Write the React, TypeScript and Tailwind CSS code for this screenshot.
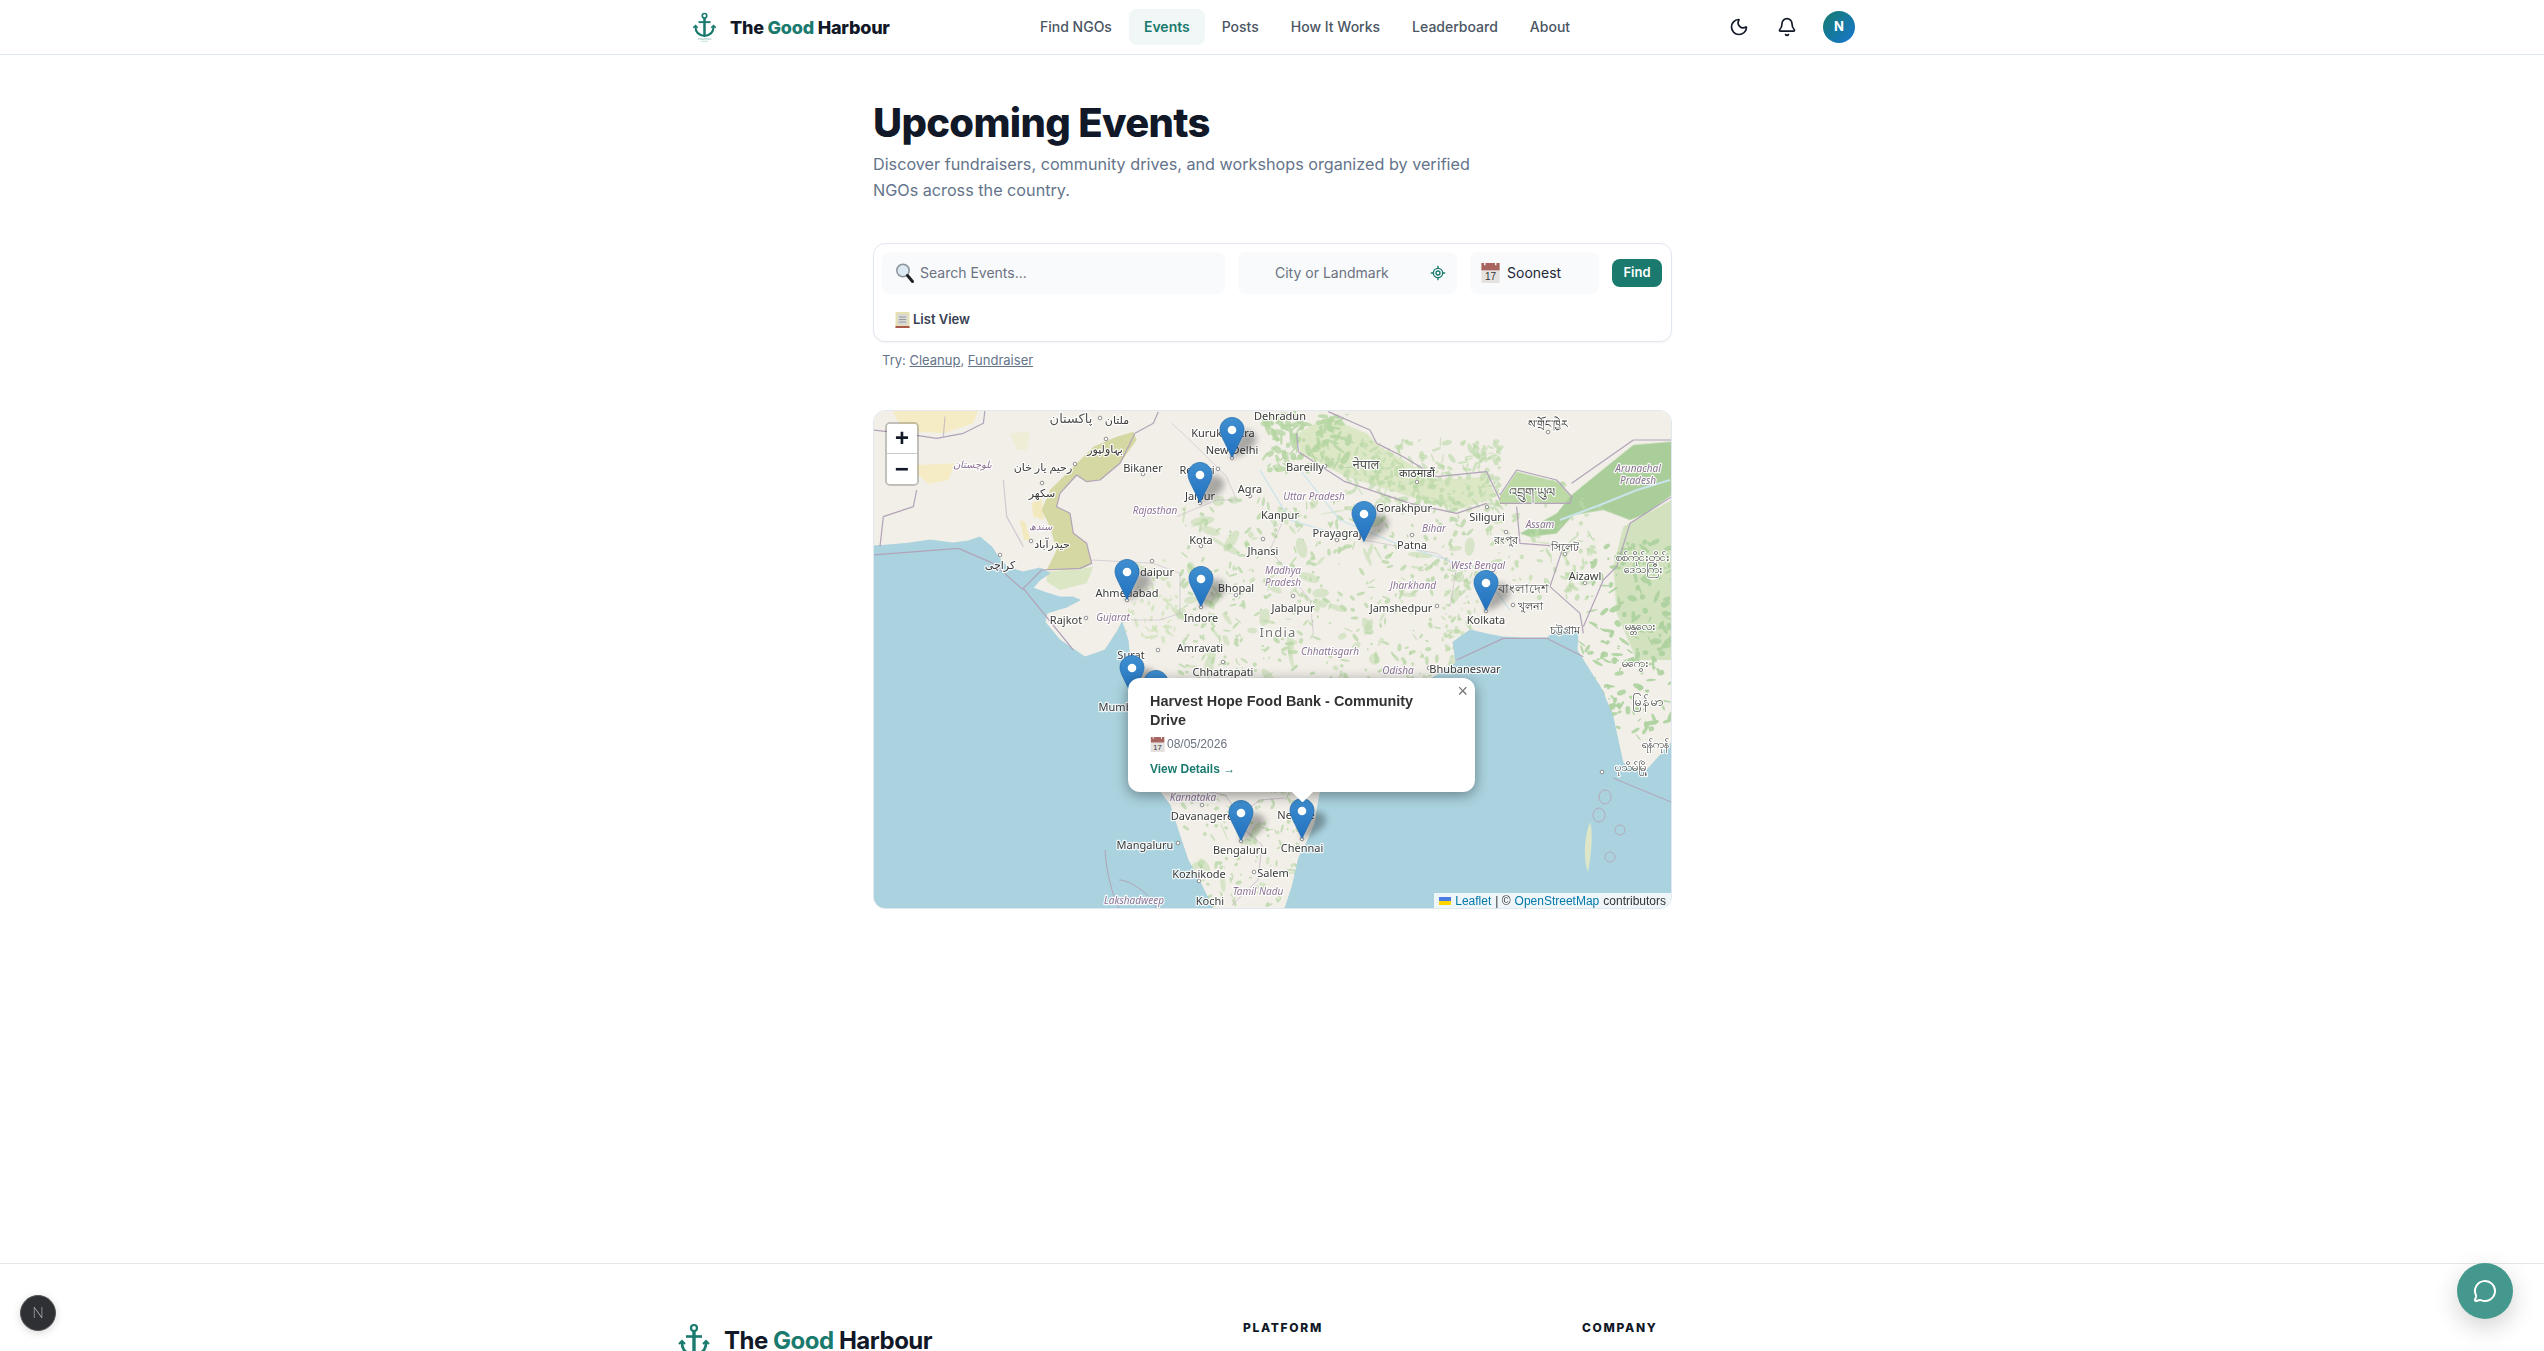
import { Bell, LocateFixed, MessageCircle, Moon } from "lucide-react";

const INTER = "font-['Inter',sans-serif]";

function Anchor({ className }: { className: string }) {
  return (
    <svg viewBox="0 0 32 40" fill="none" stroke="#1a7a6e" className={className}>
      <circle cx="16" cy="5" r="3" strokeWidth="2.2" />
      <path d="M16 8v24" strokeWidth="3.4" />
      <path d="M8 13.5h16" strokeWidth="2.6" />
      <path d="M4 20c0 7 5 11 12 12 7-1 12-5 12-12" strokeWidth="2.8" />
      <path d="M1 21l3-3 3 3M25 21l3-3 3 3" strokeWidth="2" />
      <path d="M7 36c3-1 5 1 9 0s6 1 9 0" strokeWidth="1" opacity=".6" />
      <path d="M11 39c2-.6 3 .6 5 0s3 .6 5 0" strokeWidth=".8" opacity=".4" />
    </svg>
  );
}

function Magnifier() {
  return (
    <svg viewBox="0 0 20 22" className="h-[22px] w-5 shrink-0">
      <circle cx="8" cy="8.5" r="6.2" fill="#dbe9f2" stroke="#8c9499" strokeWidth="1.5" />
      <path d="M12.5 13.5l5 6" stroke="#222" strokeWidth="3" strokeLinecap="round" />
    </svg>
  );
}

function CalendarEmoji({ className }: { className: string }) {
  return (
    <svg viewBox="0 0 20 22" className={className}>
      <rect x="0" y="0" width="20" height="22" fill="#e4e1df" />
      <rect x="0" y="0" width="20" height="8" fill="#a8645f" />
      <rect x="3" y="0" width="1.5" height="2.5" fill="#fff" />
      <rect x="15" y="0" width="1.5" height="2.5" fill="#fff" />
      <text x="10" y="19" textAnchor="middle" fontSize="11" fill="#333" fontFamily="Liberation Sans, sans-serif">17</text>
    </svg>
  );
}

function Clipboard() {
  return (
    <svg viewBox="0 0 15 16" className="h-4 w-[15px] shrink-0">
      <rect x="0.5" y="0" width="14" height="16" rx="1" fill="#e6dfae" />
      <rect x="2.5" y="2" width="10" height="11" fill="#d8d8d8" />
      <rect x="0.5" y="14" width="14" height="2" fill="#a8584c" />
      <path d="M4 5h7M4 7.5h7M4 10h7" stroke="#9a9a9a" strokeWidth="1" />
    </svg>
  );
}

// ---- map drawing -----
function blobs(seed: number, n: number, x0: number, y0: number, x1: number, y1: number, size: number, fill: string, op: number) {
  let s = seed;
  const r = () => {
    s = (s * 1664525 + 1013904223) % 4294967296;
    return s / 4294967296;
  };
  const out = [];
  for (let i = 0; i < n; i++) {
    const cx = x0 + r() * (x1 - x0);
    const cy = y0 + r() * (y1 - y0);
    const a = 0.8 + r() * size;
    const b = 0.6 + r() * size * 0.4;
    const rot = r() * 180;
    out.push(<ellipse key={seed + "-" + i} cx={cx} cy={cy} rx={a} ry={b} transform={`rotate(${rot} ${cx} ${cy})`} fill={fill} opacity={op} />);
  }
  return out;
}

type L = [number, number, string, number?];
const cities: L[] = [
  [1117, 419, "ملتان"], [1105, 448, "بہاولپور"], [1043, 466, "رحیم یار خان"], [1042, 492, "سکھر"], [1052, 543, "حیدرآباد"], [1000, 564, "کراچی"],
  [1143, 467, "Bikaner"], [1223, 432, "Kurukshetra"], [1232, 449, "New Delhi"], [1197, 469, "Rewari"], [1200, 495, "Jaipur"], [1250, 488, "Agra"], [1280, 514, "Kanpur"], [1201, 539, "Kota"], [1263, 550, "Jhansi"], [1153, 571, "Udaipur"], [1127, 592, "Ahmedabad"], [1236, 587, "Bhopal"], [1201, 617, "Indore"], [1066, 619, "Rajkot"], [1280, 415, "Dehradun"],
  [1305, 466, "Bareilly"], [1417, 472, "काठमाडौं"], [1404, 507, "Gorakhpur"], [1337, 532, "Prayagraj"], [1412, 544, "Patna"], [1487, 516, "Siliguri"], [1506, 539, "রংপুর"], [1565, 546, "সিলেট"], [1548, 423, "ས་གྲོང་ཁྱེར"], [1530, 605, "খুলনা"], [1486, 619, "Kolkata"], [1585, 575, "Aizawl"], [1401, 607, "Jamshedpur"], [1293, 607, "Jabalpur"], [1565, 629, "চট্টগ্রাম"], [1640, 625, "မန္တလေး"], [1643, 556, "စစ်ကိုင်းတိုင်း"], [1643, 568, "ဒေသကြီး"],
  [1200, 647, "Amravati"], [1131, 654, "Surat"], [1223, 671, "Chhatrapati"], [1465, 668, "Bhubaneswar"], [1120, 706, "Mumbai"], [1202, 815, "Davanagere"], [1296, 814, "Nellore"], [1145, 844, "Mangaluru"], [1240, 849, "Bengaluru"], [1302, 847, "Chennai"], [1199, 873, "Kozhikode"], [1273, 872, "Salem"], [1210, 900, "Kochi"],
  [1635, 662, "မကွေး"], [1655, 743, "ရန်ကုန်"], [1631, 766, "ပုသိမ်မြို့"],
];
const regions: L[] = [
  [972, 464, "بلوچستان"], [1040, 526, "سندھ"], [1155, 510, "Rajasthan"], [1113, 617, "Gujarat"], [1314, 496, "Uttar Pradesh"], [1434, 528, "Bihar"], [1540, 524, "Assam"], [1638, 468, "Arunachal"], [1638, 480, "Pradesh"], [1478, 565, "West Bengal"], [1413, 585, "Jharkhand"], [1283, 570, "Madhya"], [1283, 582, "Pradesh"], [1330, 651, "Chhattisgarh"], [1398, 670, "Odisha"], [1193, 797, "Karnataka"], [1258, 891, "Tamil Nadu"], [1134, 900, "Lakshadweep"],
];
const big: L[] = [
  [1071, 418, "پاکستان", 13], [1366, 464, "नेपाल", 13], [1532, 492, "འབྲུག་ཡུལ", 13], [1523, 588, "বাংলাদেশ", 13], [1278, 632, "India", 13], [1648, 701, "မြန်မာ", 13],
];
const dots: [number, number][] = [
  [1100, 418], [1106, 439], [1075, 464], [1042, 483], [1031, 541], [1000, 555], [1143, 474], [1232, 458], [1218, 469], [1200, 503], [1250, 496], [1201, 546], [1263, 539], [1152, 561], [1127, 600], [1236, 595], [1201, 607], [1086, 618], [1325, 466], [1417, 482], [1377, 507], [1337, 540], [1412, 535], [1487, 507], [1506, 532], [1565, 554], [1548, 432], [1513, 605], [1486, 611], [1585, 583], [1437, 606], [1293, 596], [1223, 662], [1429, 668], [1202, 805], [1178, 843], [1241, 841], [1302, 839], [1199, 881], [1254, 872], [1158, 650], [1602, 772],
];
const pins: [number, number][] = [[1232, 458], [1200, 503], [1127, 600], [1201, 607], [1364, 542], [1486, 611], [1156, 711], [1132, 696], [1241, 841], [1302, 839]];

function MapArt() {
  return (
    <svg viewBox="874 411 797 497" className="block h-full w-full">
      <defs>
        <linearGradient id="pin" x1="0" y1="0" x2="0" y2="1">
          <stop offset="0" stopColor="#3f8fd0" />
          <stop offset="1" stopColor="#2170bf" />
        </linearGradient>
        <filter id="sh" x="-40%" y="-40%" width="180%" height="180%"><feGaussianBlur stdDeviation="3" /></filter>
        <filter id="soft" x="-10%" y="-10%" width="120%" height="120%"><feGaussianBlur stdDeviation=".5" /></filter>
        <filter id="wash" x="-10%" y="-10%" width="120%" height="120%"><feGaussianBlur stdDeviation="2" /></filter>
      </defs>
      <rect x="873" y="411" width="798" height="497" fill="#f2efe9" />

      {/* deserts and sands, Pakistan side */}
      <g transform="translate(860 400) scale(.33333)">
        <path d="M95 30L355 30L340 70L250 100L180 95L120 75Z" fill="#f5ecc6" />
        <path d="M170 195L285 190L265 240L205 252L175 225Z" fill="#f5ecc6" />
        <path d="M515 310L545 295L552 360L520 350Z" fill="#f3e9bf" />
        <path d="M480 360L495 365L512 420L492 420Z" fill="#f3e9bf" />
        <path d="M820 95L830 120L780 190L720 240L680 245L650 225L600 280L590 320L630 340L640 400L680 430L695 490L660 510L560 510L590 450L570 380L545 330L570 270L640 200L700 140L770 110Z" fill="#d6d8a4" />
        <path d="M560 515L700 500L680 550L600 570L560 545Z" fill="#dbe6c4" />
        <path d="M450 100L510 95L500 150L470 150Z" fill="#ecebc8" opacity=".6" />
      </g>

      {/* forest & farmland */}
      <g transform="translate(1270 400) scale(.33333)" filter="url(#wash)">
        <path d="M85 100L170 50L290 100L330 140L400 180L500 240L650 230L680 290L560 330L420 290L230 230L90 160Z" fill="#d5e5bc" opacity=".8" />
        <path d="M690 290L740 215L860 245L905 290L900 310L690 310Z" fill="#bcd9a6" />
        <path d="M905 285L960 240L1090 135L1205 125L1205 285L1130 340L1080 360L1000 330L910 345L860 400L780 410L750 400L860 340Z" fill="#a9ce99" />
        <path d="M1060 380L1205 300L1205 780L1100 780L1040 640L1030 500Z" fill="#c9dfb4" opacity=".8" />
        <path d="M760 420L880 440L900 500L850 430Z" fill="#c9dfb4" opacity=".8" />
      </g>
      <g filter="url(#soft)">
        {blobs(21, 90, 1180, 500, 1470, 690, 12, "#bcd9a8", 0.5)}
        {blobs(22, 30, 1190, 700, 1290, 900, 10, "#bcd9a8", 0.5)}
        {blobs(19, 130, 1265, 414, 1350, 470, 7, "#b5d6a2", 0.8)}
        {blobs(11, 260, 1340, 440, 1500, 510, 5, "#b9d8a6", 0.6)}
        {blobs(12, 420, 1180, 500, 1470, 690, 4, "#b5d6a2", 0.7)}
        {blobs(13, 220, 1180, 690, 1300, 905, 3.5, "#b5d6a2", 0.7)}
        {blobs(14, 70, 1120, 560, 1180, 640, 4, "#cfe2b8", 0.7)}
        {blobs(15, 120, 1480, 480, 1600, 600, 5, "#b9d8a6", 0.65)}
        {blobs(16, 170, 1590, 540, 1671, 740, 6, "#add19e", 0.9)}
        {blobs(17, 60, 1440, 560, 1480, 650, 4, "#b5d6a2", 0.6)}
        {blobs(18, 70, 1570, 640, 1620, 770, 4, "#add19e", 0.85)}
      </g>
      <g stroke="#c8e3ea" fill="none" strokeWidth="1.2">
        <path d="M1560 520L1600 505L1637 490L1670 480" strokeWidth="2" />
        <path d="M1300 470L1340 520L1400 545L1480 570L1510 610" />
        <path d="M1260 470L1290 520L1340 535" />
        <path d="M1140 680L1230 690L1300 710" />
      </g>

      {/* seas */}
      <path fill="#aad3df" stroke="#a5cfdb" strokeWidth=".8" strokeLinejoin="round" d="M873 546L888 545L910 543L930 540L953 543L968 541L980 537L992 547L997 555L1007 567L1023 572L1040 568L1050 573L1040 580L1033 588L1047 593L1060 597L1073 597L1080 600L1067 607L1047 613L1045 622L1060 640L1085 657L1105 650L1118 630L1122 622L1128 640L1130 660L1133 680L1128 700L1130 720L1145 760L1160 792L1170 805L1178 830L1188 860L1199 880L1213 908L873 908Z" />
      <path fill="#aad3df" stroke="#a5cfdb" strokeWidth=".8" strokeLinejoin="round" d="M1285 908L1292 887L1299 857L1308 840L1315 823L1320 793L1360 750L1400 705L1424 683L1456 663L1453 642L1470 630L1487 634L1503 637L1523 638L1547 638L1560 627L1578 633L1577 650L1602 690L1613 717L1623 763L1644 773L1671 743L1671 908Z" />
      {/* Andaman */}
      <g fill="none" stroke="#b6a9bc" strokeWidth="1">
        <ellipse cx="1605" cy="797" rx="6" ry="7" />
        <ellipse cx="1599" cy="815" rx="6" ry="7" />
        <ellipse cx="1620" cy="830" rx="5" ry="5" />
        <ellipse cx="1610" cy="857" rx="5" ry="5" />
      </g>
      <path d="M1590 822c3 8 2 28-2 50-5-14-4-34 2-50z" fill="#dfe6c8" />

      {/* borders */}
      <g fill="none" stroke="#b2a3b9" strokeWidth="3.6" strokeLinejoin="round" transform="translate(860 400) scale(.33333)">
        <path d="M375 30L370 70L310 100L230 115L130 100L40 90" />
        <path d="M255 50L250 110" opacity=".6" />
        <path d="M170 270L160 320L70 350L60 440" />
        <path d="M895 35L880 70L825 100L780 190L720 240L680 245L650 225L600 280L590 320L630 340L640 400L680 430L695 490L660 505L545 510L490 565L640 750" />
        <path d="M40 465L295 445L400 490L490 570" />
        <path d="M430 240L440 350L490 440" opacity=".5" />
        <path d="M695 480L880 490L960 520L960 640L900 660L810 660" opacity=".5" strokeWidth="2.4" />
        <path d="M935 70L1000 130L1100 230L1130 300L1070 300L950 350" opacity=".5" strokeWidth="2.4" />
      </g>
      <g fill="none" stroke="#b2a3b9" strokeWidth="3.6" strokeLinejoin="round" transform="translate(1270 400) scale(.33333)">
        <path d="M175 35L300 90L320 130L400 170L500 230L650 215L690 300" />
        <path d="M85 155L225 245L420 310L560 340L650 310" />
        <path d="M80 100L85 155" />
        <path d="M690 285L740 210L860 240L905 290L900 310L690 310" />
        <path d="M905 250L1090 120L1205 120" />
        <path d="M740 320L750 430L880 440L840 560L930 640L940 700" />
        <path d="M1205 290L1080 370L1040 500L1000 540L940 680" />
        <path d="M700 715L560 780M700 715L830 715L940 770" />
        <path d="M280 420L500 460L560 500L540 620" opacity=".5" strokeWidth="2.4" />
        <path d="M40 360L0 450L120 600L130 700" opacity=".5" strokeWidth="2.4" />
      </g>
      <path d="M1613 778L1671 802" stroke="#b2a3b9" strokeWidth="1" fill="none" />
      <path d="M1119 880C1135 880 1160 905 1155 908" stroke="#b2a3b9" strokeWidth="1" fill="none" />
      <path d="M1105 850C1106 870 1112 895 1119 908" stroke="#b2a3b9" strokeWidth="1" fill="none" />
      <path d="M1200 790L1225 795L1240 815L1260 800L1285 798" stroke="#c5b8ca" strokeWidth=".8" fill="none" />
      <path d="M1240 825L1262 845L1258 880L1232 905" stroke="#c5b8ca" strokeWidth=".8" fill="none" />

      {dots.map(([x, y], i) => (
        <circle key={i} cx={x} cy={y} r="1.8" fill="#fff" stroke="#777" strokeWidth=".8" />
      ))}
      <g fontFamily="'Noto Sans','DejaVu Sans','Open Sans',sans-serif" dominantBaseline="central" textAnchor="middle" paintOrder="stroke" stroke="#fff" strokeOpacity=".85" strokeWidth="2.4" strokeLinejoin="round">
        {cities.map(([x, y, t], i) => (
          <text key={i} x={x} y={y} fontSize="11" fill="#3a3a3a">{t}</text>
        ))}
        {regions.map(([x, y, t], i) => (
          <text key={i} x={x} y={y} fontSize="10" fontStyle="italic" fill="#8d7396">{t}</text>
        ))}
        {big.map(([x, y, t, s], i) => (
          <text key={i} x={x} y={y} fontSize={s} fill={t === "India" ? "#777" : "#555"} letterSpacing={t === "India" ? "1.2" : "0"}>{t}</text>
        ))}
      </g>
      {pins.map(([x, y], i) => (
        <path key={i} d={`M${x - 2} ${y}L${x + 6} ${y - 2}C${x + 22} ${y - 10} ${x + 28} ${y - 18} ${x + 22} ${y - 24}C${x + 16} ${y - 30} ${x + 10} ${y - 28} ${x + 8} ${y - 24}Z`} fill="#000" opacity=".3" filter="url(#sh)" />
      ))}
      {pins.map(([x, y], i) => (
        <g key={i} transform={`translate(${x - 12.5} ${y - 41})`}>
          <path d="M12.5.5C5.9.5.5 5.9.5 12.5c0 2.5.9 5.2 2.1 7.7L12.5 40.5l9.9-20.3c1.2-2.5 2.1-5.2 2.1-7.7C24.5 5.9 19.1.5 12.5.5z" fill="url(#pin)" stroke="#2a6fae" strokeWidth=".8" />
          <circle cx="12.5" cy="13" r="4.3" fill="#fff" />
        </g>
      ))}
    </svg>
  );
}

export default function App() {
  return (
    <div className={`relative h-[1351px] overflow-hidden bg-white ${INTER}`}>
      <header className="flex h-[55px] items-center border-b border-[#e2e8f0] pl-[692px] pr-[689px]">
        <div className="flex w-[333px] items-center gap-[13px]">
          <Anchor className="h-[30px] w-[25px]" />
          <span className="text-[18px] font-extrabold tracking-[-0.012em] text-[#111827]">
            The <span className="text-[#1a7a6e]">Good</span> Harbour
          </span>
        </div>
        <nav className="flex items-center gap-0.5 text-sm font-medium text-[#4b5563]">
          <a className="rounded-lg px-[15px] py-2">Find NGOs</a>
          <a className="rounded-lg bg-[#f0f7f6] px-[15px] py-2 font-semibold text-[#1a7a6e]">Events</a>
          <a className="rounded-lg px-[15px] py-2">Posts</a>
          <a className="rounded-lg px-[15px] py-2">How It Works</a>
          <a className="rounded-lg px-[15px] py-2">Leaderboard</a>
          <a className="rounded-lg px-[15px] py-2">About</a>
        </nav>
        <div className="ml-auto flex items-center gap-3">
          <span className="flex h-9 w-9 items-center justify-center"><Moon size={20} color="#111827" /></span>
          <span className="flex h-9 w-9 items-center justify-center"><Bell size={20} color="#111827" /></span>
          <span className="ml-[6px] flex h-8 w-8 items-center justify-center rounded-full bg-linear-to-br from-[#1a7a6e] to-[#1d74cf] text-[13px] font-bold text-white">N</span>
        </div>
      </header>

      <main className="ml-[873px] w-[799px]">
        <h1 className="pt-[44px] text-[40px] leading-[48px] font-extrabold tracking-[-0.017em] text-[#111827]">Upcoming Events</h1>
        <p className="mt-1 w-[620px] text-[16.2px] leading-[26px] text-[#64748b]">
          Discover fundraisers, community drives, and workshops organized by verified NGOs across the country.
        </p>

        <div className="mt-[40px] flex h-[99px] flex-wrap content-start gap-x-[13px] gap-y-3 rounded-xl border border-[#e2e8f0] bg-white p-2 shadow-[0_1px_2px_rgba(0,0,0,0.05)]">
          <div className="flex h-[42px] w-[343px] items-center gap-[5px] rounded-lg bg-[#f8fafc] pl-[13px]">
            <Magnifier />
            <span className="text-sm text-[#6b7280]">Search Events...</span>
          </div>
          <div className="flex h-[42px] w-[219px] items-center justify-between rounded-lg bg-[#f8fafc] pr-[11px] pl-[37px]">
            <span className="text-sm text-[#6b7280]">City or Landmark</span>
            <LocateFixed size={16} color="#1a7a6e" />
          </div>
          <div className="flex h-[42px] w-[129px] items-center gap-[7px] rounded-lg bg-[#f8fafc] pl-[11px]">
            <CalendarEmoji className="h-[20px] w-[19px] shrink-0" />
            <span className="text-sm text-[#1f2937]">Soonest</span>
          </div>
          <button className="mt-[7px] h-[28px] w-[50px] rounded-lg bg-[#1a7a6e] text-[13px] font-semibold text-white">Find</button>
          <div className="flex h-[27px] w-full items-center gap-[3px] pl-[13px] text-[13px] font-semibold text-[#374151]">
            <Clipboard />
            List View
          </div>
        </div>

        <p className="mt-[10px] pl-[9px] text-[13px] leading-4 text-[#64748b]">
          Try: <span className="underline">Cleanup</span>, <span className="underline">Fundraiser</span>
        </p>

        <div className="relative mt-[42px] h-[499px] overflow-hidden rounded-xl border border-[#e2e8f0] font-['Liberation_Sans',sans-serif]">
          <MapArt />

          <div className="absolute top-[11px] left-[11px] w-[34px] rounded-[5px] border-2 border-[#00000033] bg-clip-padding">
            <div className="flex h-[30px] items-center justify-center rounded-t-[3px] border-b border-[#ccc] bg-white pt-[3px] font-['Liberation_Mono',monospace] text-[24px] font-bold text-[#111827]">+</div>
            <div className="flex h-[30px] items-center justify-center rounded-b-[3px] bg-white pt-[3px] font-['Liberation_Mono',monospace] text-[24px] font-bold text-[#111827]">−</div>
          </div>

          <div className="absolute top-[267px] left-[254px] h-[114px] w-[347px] rounded-xl bg-white px-[22px] pt-[14px] text-[#333] shadow-[0_3px_14px_rgba(0,0,0,0.4)]">
            <p className="w-[290px] text-[14.4px] leading-[19px] font-bold">Harvest Hope Food Bank - Community Drive</p>
            <p className="mt-[6px] flex h-[16px] items-center gap-[2px] text-[12px] text-[#6b7280]">
              <CalendarEmoji className="h-[15px] w-[15px] shrink-0" />
              08/05/2026
            </p>
            <p className="mt-[9px] text-[12px] leading-4 font-bold text-[#1a7a6e]">View Details →</p>
            <span className="absolute top-[1px] right-[7px] text-[18px] leading-6 text-[#757575]">×</span>
            <div className="absolute top-full left-[154px] h-[10px] w-[40px] overflow-hidden">
              <div className="mx-auto -mt-[10px] h-[17px] w-[17px] rotate-45 bg-white" />
            </div>
          </div>

          <div className="absolute right-0 bottom-0 flex h-[15px] items-center gap-[4px] bg-[#ffffffcc] px-[5px] text-[12px] leading-none text-[#333]">
            <svg viewBox="0 0 12 8" className="h-2 w-3"><rect width="12" height="4" fill="#4c7be1" /><rect y="4" width="12" height="4" fill="#ffd500" /></svg>
            <span className="text-[#0078a8]">Leaflet</span>
            <span>| ©</span>
            <span className="text-[#0078a8]">OpenStreetMap</span>
            <span>contributors</span>
          </div>
        </div>
      </main>

      <footer className="mt-[354px] border-t border-[#e5e7eb] pt-[56px]">
        <div className="mx-auto grid w-[1200px] grid-cols-[571px_339px_1fr]">
          <div className="mt-[3px] flex items-start gap-[14px] pl-[6px]">
            <Anchor className="h-10 w-8 shrink-0" />
            <span className="text-[24px] leading-[36px] font-bold tracking-[-0.02em] text-[#111827]">
              The <span className="text-[#1a7a6e]">Good</span> Harbour
            </span>
          </div>
          <h4 className="text-[12px] leading-4 font-extrabold tracking-[0.14em] text-[#111827] uppercase">Platform</h4>
          <h4 className="text-[12px] leading-4 font-extrabold tracking-[0.14em] text-[#111827] uppercase">Company</h4>
        </div>
      </footer>

      <div className="fixed bottom-[20px] left-[20px] flex h-9 w-9 items-center justify-center rounded-full border border-[#555] bg-[#2f3034] text-[15px] font-thin text-white shadow-[0_2px_8px_rgba(0,0,0,0.15)]">N</div>
      <div className="fixed right-[31px] bottom-[32px] flex h-14 w-14 items-center justify-center rounded-full bg-[#45988d] shadow-[0_8px_24px_rgba(0,0,0,0.18)]">
        <MessageCircle size={24} color="#fff" />
      </div>
    </div>
  );
}
